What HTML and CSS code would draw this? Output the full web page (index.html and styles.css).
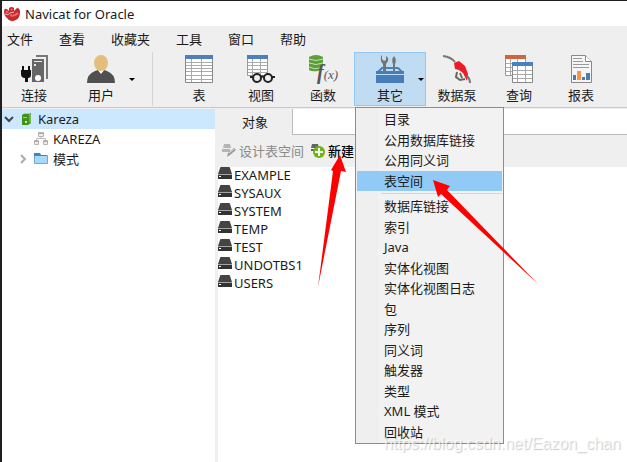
FILE: index.html
```html
<!DOCTYPE html>
<html lang="zh-CN">
<head>
<meta charset="utf-8">
<title>Navicat for Oracle</title>
<link rel="stylesheet" href="styles.css">
</head>
<body>
<svg class="defs" width="0" height="0" aria-hidden="true">
  <symbol id="disk" viewBox="0 0 14 13"><path d="M3 0h8q1 0 1 1l2 6H0l2-6q0-1 1-1z" fill="#444"/><path d="M0 8h14v4H0z" fill="#333"/><path d="M0 7h14v1H0z" fill="#a5a5a5"/><path d="M1 9h2v1H1z" fill="#fff"/></symbol>
</svg>
<div class="window">
  <header class="title-bar">
    <svg width="18" height="16" viewBox="0 0 18 16"><path d="M1 5Q1 2 4 3L6 5L6 2Q9 0 11 2L11 5L14 2Q17 2 17 6Q17 12 13 14Q7 17 4 12Q1 10 1 5z" fill="#c9292d"/><path d="M3 5l2 2M8 3l1 1M7 9q4 2 8-2" fill="none" stroke="#e8686a" stroke-width="2"/><path d="M2 8q3 2 5-1l4-1" fill="none" stroke="#f3b9ba"/></svg>
    <h1>Navicat for Oracle</h1>
  </header>
  <nav class="menu-bar">
    <button>文件</button><button>查看</button><button>收藏夹</button><button>工具</button><button>窗口</button><button>帮助</button>
  </nav>
  <div class="toolbar">
    <button class="tool">
      <svg width="28" height="28" viewBox="0 0 28 28"><path d="M2 11h2v4h4v-4h2v4h1v5q0 3-3 3v4H5v-4q-4 0-4-4v-4h1z" fill="#111"/><path d="M16 1h11v23" fill="none" stroke="#777" stroke-width="2"/><path d="M12 4h12v23H12z" fill="#666"/><path d="M14 6h8v1h-8zM14 9h2v2h-2z" fill="#eee"/><circle cx="18" cy="23" r="3" fill="#fff"/></svg>
      <span>连接</span>
    </button>
    <button class="tool wide">
      <svg width="28" height="28" viewBox="0 0 28 28"><path d="M0 28q0-9 8-12l3-1h6l3 1q8 3 8 12z" fill="#505050"/><path d="M10 14h8l-4 5z" fill="#fff"/><ellipse cx="14" cy="8" rx="7" ry="8" fill="#e3be7c"/></svg>
      <span>用户</span><i class="caret"></i>
    </button>
    <div class="divider"></div>
    <button class="tool">
      <svg width="28" height="28" viewBox="0 0 28 28"><path d="M.5.5h27v27H.5z" fill="#fff" stroke="#888"/><path d="M0 0h28v4H0z" fill="#4a80bd"/><path d="M1 7.5h26M1 10.500h26M1 13.500h26M1 16.500h26M1 20.500h26M1 24.500h26M6.500 4v23M16.500 4v23" stroke="#aaa"/></svg>
      <span>表</span>
    </button>
    <button class="tool">
      <svg width="28" height="28" viewBox="0 0 28 28"><path d="M.5.5h20v20H.5z" fill="#fff" stroke="#999"/><path d="M0 0h21v4H0z" fill="#4a80bd"/><path d="M1 7.500h19M1 10.500h19M1 14.500h19M1 17.500h19M5.500 4v16M13.500 4v16" stroke="#aaa"/><path d="M2 21h26v3H2z" fill="#efefef"/><circle cx="10" cy="23" r="4" fill="#efefef" stroke="#222" stroke-width="2"/><circle cx="21" cy="23" r="4" fill="#efefef" stroke="#222" stroke-width="2"/><path d="M3 22h3M14 22q1-1 3 0M25 22h3" fill="none" stroke="#222" stroke-width="2"/></svg>
      <span>视图</span>
    </button>
    <button class="tool">
      <svg class="formula" width="28" height="28" viewBox="0 0 28 28"><path d="M0 2q7-4 14 0v9l-5 5q-6 1-9-1z" fill="#5c9e38"/><path d="M0 4q7 3 14 0M0 8q7 3 14 0M0 12q6 3 11 1" fill="none" stroke="#c5dfb5"/><text x="8" y="24"><tspan class="fx-big">f</tspan><tspan class="fx">(x)</tspan></text></svg>
      <span>函数</span>
    </button>
    <button class="tool wide active">
      <svg width="28" height="28" viewBox="0 0 28 28"><path d="M6 0v4l2 2 2-1V1q3 2 2 5l-2 3v8H7V9Q4 6 5 1z" fill="#747474"/><path d="M18 1q3 3 1 8v8h-2V9q-2-5 1-8z" fill="#747474"/><path d="M2 17l4-4h16l4 4" fill="none" stroke="#4a80bd" stroke-width="2"/><path d="M0 16h28v3H0zM0 20h28v8H0z" fill="#477eb9"/><path d="M7 10h3v6H7zM17 10h2v6h-2z" fill="#747474"/></svg>
      <span>其它</span><i class="caret"></i>
    </button>
    <button class="tool">
      <svg width="28" height="28" viewBox="0 0 28 28"><path d="M0 1q8 1 12 6" fill="none" stroke="#777" stroke-width="2"/><path d="M11 8l5-2 6 5 3 8-1 7-4-8-4-3-4-1z" fill="#ed1c24"/><path d="M14 17l-1 5 4 3 5-1M17 18l2 5" fill="none" stroke="#666" stroke-width="2"/><path d="M24 21q3 3 3 7" fill="none" stroke="#777" stroke-width="2"/></svg>
      <span>数据泵</span>
    </button>
    <button class="tool">
      <svg width="28" height="28" viewBox="0 0 28 28"><path d="M.5.5h20v20H.5z" fill="#fff" stroke="#999"/><path d="M0 0h21v4H0z" fill="#d3623f"/><path d="M1 8.500h19M1 12.500h19M1 16.500h19M5.500 4v16M12.500 4v16" stroke="#aaa"/><path d="M7.500 7.500h20v20h-20z" fill="#fff" stroke="#888"/><path d="M7 7h21v4H7z" fill="#4a80bd"/><path d="M8 15.500h19M8 19.500h19M8 23.500h19M12.500 11v16M20.500 11v16" stroke="#aaa"/></svg>
      <span>查询</span>
    </button>
    <button class="tool">
      <svg width="28" height="28" viewBox="0 0 28 28"><path d="M4.500.5h14l6 6v21h-20z" fill="#f6f6f6" stroke="#888"/><path d="M18.500.5v6h6" fill="#fff" stroke="#888"/><path d="M6 3.500h9M6 6.500h10M6 9.500h16M6 12.500h16" stroke="#999"/><path d="M6 20h3v5H6zM15 22h3v3h-3zM19 18h4v7h-4z" fill="#477eb9"/><path d="M10 16h4v9h-4z" fill="#f79646"/></svg>
      <span>报表</span>
    </button>
  </div>
  <div class="workspace">
    <ul class="tree">
      <li class="selected">
        <svg class="chevron" width="10" height="10" viewBox="0 0 10 10"><path d="M1 3l4 4 4-4" fill="none" stroke="#444" stroke-width="2"/></svg>
        <svg width="12" height="14" viewBox="0 0 12 14"><path d="M1 3l3-2h6v10l-3 2H1z" fill="#3f9318"/><path d="M3 1.500h6v9" fill="none" stroke="#a9d38f"/><path d="M2 5h4v1H2z" fill="#9bd47c"/><circle cx="5" cy="10" r="1" fill="#fff"/></svg>
        <span>Kareza</span>
      </li>
      <li class="child">
        <svg width="14" height="14" viewBox="0 0 14 14"><path d="M4.500.5h5v4h-5zM.5 8.500h4v4h-4zM9.500 8.500h4v4h-4z" fill="#eee" stroke="#b5b5b5"/><path d="M4 1h6v1H4zM0 9h5v1H0zM9 9h5v1H9z" fill="#aaa"/><path d="M7 5v2M2.500 8V6.500h9V8" fill="none" stroke="#bbb"/></svg>
        <span>KAREZA</span>
      </li>
      <li class="child">
        <svg class="chevron" width="10" height="10" viewBox="0 0 10 10"><path d="M3 1l4 4-4 4" fill="none" stroke="#aaa" stroke-width="2"/></svg>
        <svg width="14" height="14" viewBox="0 0 14 14"><path d="M.5 1.500h5l1 2h7v8H.5z" fill="#a8d8fb" stroke="#6ba9d8"/><path d="M0 1h6l1 2h6v1H0z" fill="#4385bc"/></svg>
        <span>模式</span>
      </li>
    </ul>
    <main class="content">
      <div class="tabs"><button class="tab">对象</button></div>
      <div class="actions">
        <button disabled><svg width="14" height="14" viewBox="0 0 14 14"><path d="M2 0h6l1 4H1zM0 5h8v3H0z" fill="#b5b5b5"/><path d="M5 13l1-4 6-5 2 2-6 5z" fill="#999"/><path d="M7 9l5-4" stroke="#ddd"/></svg>设计表空间</button>
        <button class="create"><svg width="14" height="14" viewBox="0 0 14 14"><path d="M1 0h6l1 4H0zM0 5h7v2H0z" fill="#666"/><circle cx="8" cy="8" r="6" fill="#6cb512"/><path d="M8 4v8M4 8h8" stroke="#fff" stroke-width="2"/></svg>新建</button>
      </div>
      <ul class="objects">
        <li><svg width="14" height="13"><use href="#disk"/></svg>EXAMPLE</li>
        <li><svg width="14" height="13"><use href="#disk"/></svg>SYSAUX</li>
        <li><svg width="14" height="13"><use href="#disk"/></svg>SYSTEM</li>
        <li><svg width="14" height="13"><use href="#disk"/></svg>TEMP</li>
        <li><svg width="14" height="13"><use href="#disk"/></svg>TEST</li>
        <li><svg width="14" height="13"><use href="#disk"/></svg>UNDOTBS1</li>
        <li><svg width="14" height="13"><use href="#disk"/></svg>USERS</li>
      </ul>
    </main>
  </div>
  <div class="popup">
    <button>目录</button>
    <button>公用数据库链接</button>
    <button>公用同义词</button>
    <button class="current">表空间</button>
    <hr>
    <button>数据库链接</button>
    <button>索引</button>
    <button>Java</button>
    <button>实体化视图</button>
    <button>实体化视图日志</button>
    <button>包</button>
    <button>序列</button>
    <button>同义词</button>
    <button>触发器</button>
    <button>类型</button>
    <button>XML 模式</button>
    <button>回收站</button>
  </div>
  <svg class="pointers" width="627" height="462" viewBox="0 0 627 462"><path d="M340 155l6 17-5-1-23 116 15-116-2-1zM433 180l17 6-3 4 91 94-97-90-3 3z" fill="#f00"/></svg>
  <div class="watermark">https://blog.csdn.net/Eazon_chan</div>
</div>
</body>
</html>
```
FILE: styles.css
```css
* { box-sizing: border-box; }
body {
  margin: 0;
  font: 13px/20px "Noto Sans", "Noto Sans CJK SC", sans-serif;
  color: #1a1a1a;
}
ul { margin: 0; padding: 0; list-style: none; }
button {
  border: 0;
  padding: 0;
  background: none;
  font: inherit;
  color: inherit;
}
svg { flex: none; }
.defs { position: absolute; }
.window {
  position: relative;
  display: flex;
  flex-direction: column;
  min-height: 100vh;
  overflow: hidden;
  border-left: 2px solid #201e21;
  border-top: 1px solid #201e21;
  background: #efefef;
}
.title-bar {
  display: flex;
  align-items: center;
  gap: 4px;
  height: 25px;
  padding-left: 1px;
  background: #fff;
}
.title-bar h1 { margin: 0; font-size: 13px; font-weight: 400; }
.menu-bar {
  display: flex;
  align-items: center;
  gap: 26px;
  height: 26px;
  padding-left: 5px;
}
.toolbar {
  display: flex;
  height: 56px;
  padding: 0 0 1px 1px;
  border-bottom: 1px solid #c8c8c8;
}
.tool {
  position: relative;
  display: flex;
  flex-direction: column;
  align-items: center;
  gap: 2px;
  width: 62px;
  padding-top: 3px;
}
.wide { width: 72px; }
.active { background: #c0dcf3; outline: 1px solid #90c8f6; outline-offset: -1px; }
.caret {
  position: absolute;
  right: 2px;
  top: 26px;
  border: 3px solid transparent;
  border-top-color: #000;
  border-bottom: 0;
}
.divider { width: 1px; margin: 0 15px; background: #d4d4d4; }
.formula { overflow: visible; }
.formula text { font: italic 13px "Liberation Serif", serif; fill: #555; }
.formula .fx-big { font-size: 20px; font-weight: 700; }
.workspace { display: flex; flex: 1; padding-top: 1px; }
.tree { width: 213px; background: #fff; }
.tree li {
  display: flex;
  align-items: center;
  gap: 5px;
  height: 20px;
  padding-left: 2px;
}
.tree .chevron { margin-right: 2px; }
.tree .selected { background: #cce8ff; }
.tree .child { padding-left: 16px; }
.tree .child > svg:first-child:not(.chevron) { margin-left: 16px; }
.tree .child .chevron { margin-right: 1px; }
.content {
  display: flex;
  flex-direction: column;
  flex: 1;
  margin-left: 3px;
}
.tabs {
  display: flex;
  height: 26px;
  background: #fff;
  border-bottom: 1px solid #bbb;
}
.tab {
  width: 75px;
  height: 26px;
  border-right: 1px solid #bbb;
  background: #efefef;
}
.actions {
  display: flex;
  align-items: center;
  gap: 7px;
  height: 32px;
  padding-left: 4px;
}
.actions button { display: flex; align-items: center; gap: 3px; }
.actions button:disabled { color: #8a8a8a; }
.actions .create { font-weight: 500; color: #000; }
.objects { flex: 1; background: #fff; }
.objects li {
  display: flex;
  align-items: flex-start;
  gap: 2px;
  height: 18px;
  line-height: 16px;
}
.popup {
  position: absolute;
  left: 353px;
  top: 106px;
  display: flex;
  flex-direction: column;
  width: 149px;
  height: 337px;
  padding: 1px;
  border: 1px solid #8c8c8c;
  background: linear-gradient(to right, #efefef 22px, #f2f2f2 22px);
}
.popup button { flex: 1; padding-left: 27px; line-height: 18px; text-align: left; }
.popup .current { background: #91c9f7; }
.popup hr {
  width: 121px;
  margin: 2px 0 2px 24px;
  border: 0;
  border-top: 1px solid #d5d5d5;
}
.pointers { position: absolute; left: -2px; top: -1px; }
.watermark {
  position: absolute;
  left: 382px;
  top: 433px;
  font: 16px/20px "Liberation Sans", sans-serif;
  color: rgba(255, 255, 255, 0.7);
  text-shadow: 1px 1px 1px rgba(120, 120, 120, 0.4);
}
```
